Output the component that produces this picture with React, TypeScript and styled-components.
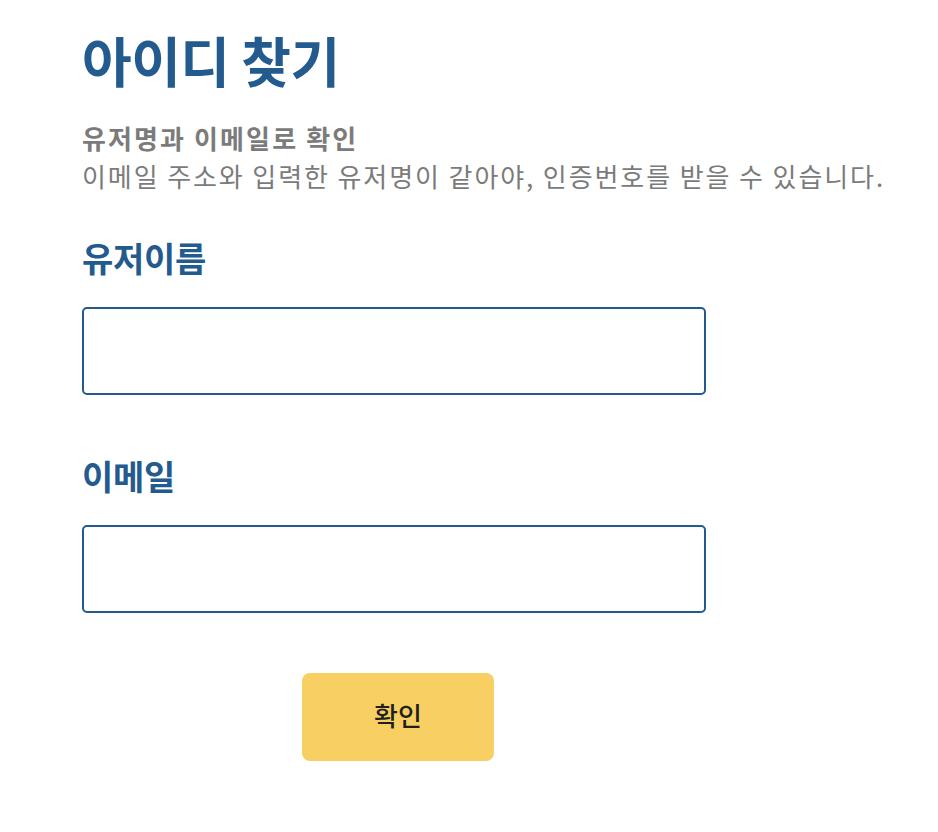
import React from "react";
import styled, { createGlobalStyle } from "styled-components";

const GlobalStyle = createGlobalStyle`
  * { box-sizing: border-box; }
  body {
    margin: 0;
    background: #ffffff;
    font-family: "Noto Sans CJK KR", "Noto Sans", sans-serif;
  }
`;

const Page = styled.main`
  display: flex;
  flex-direction: column;
  padding: 22px 0 0 82px;
  width: 938px;
`;

const Title = styled.h1`
  margin: 0;
  font-size: 54px;
  line-height: 76px;
  font-weight: 700;
  letter-spacing: -0.5px;
  color: #245b8f;
`;

const Guide = styled.div`
  margin-top: 21px;
  display: flex;
  flex-direction: column;
  color: #7b7b7b;
  font-size: 26px;
  line-height: 38px;
`;

const GuideTitle = styled.p`
  margin: 0;
  font-weight: 700;
  letter-spacing: 2.1px;
`;

const GuideText = styled.p`
  margin: 0;
  font-weight: 400;
  letter-spacing: 1.9px;
`;

const Form = styled.form`
  display: flex;
  flex-direction: column;
  width: 624px;
`;

const Field = styled.div<{ $first?: boolean }>`
  display: flex;
  flex-direction: column;
  margin-top: ${(p) => (p.$first ? "41px" : "59px")};
`;

const Label = styled.label`
  font-size: 34px;
  line-height: 44px;
  font-weight: 700;
  letter-spacing: -0.3px;
  color: #245b8f;
`;

const Input = styled.input`
  margin-top: 27px;
  width: 624px;
  height: 88px;
  border: 2px solid #245b8f;
  border-radius: 5px;
  padding: 0 16px;
  font-size: 22px;
  font-family: inherit;
  outline: none;
`;

const Submit = styled.button`
  margin: 60px 0 0 220px;
  width: 192px;
  height: 88px;
  padding: 0 0 5px;
  border: none;
  border-radius: 8px;
  background: #f7cf63;
  color: #1f1f1f;
  font-family: inherit;
  font-size: 26px;
  font-weight: 500;
  cursor: pointer;
`;

export default function App() {
  return (
    <>
      <GlobalStyle />
      <Page>
        <Title>아이디 찾기</Title>
        <Guide>
          <GuideTitle>유저명과 이메일로 확인</GuideTitle>
          <GuideText>
            이메일 주소와 입력한 유저명이 같아야, 인증번호를 받을 수 있습니다.
          </GuideText>
        </Guide>
        <Form onSubmit={(e) => e.preventDefault()}>
          <Field $first>
            <Label htmlFor="username">유저이름</Label>
            <Input id="username" type="text" />
          </Field>
          <Field>
            <Label htmlFor="email">이메일</Label>
            <Input id="email" type="email" />
          </Field>
          <Submit type="submit">확인</Submit>
        </Form>
      </Page>
    </>
  );
}
